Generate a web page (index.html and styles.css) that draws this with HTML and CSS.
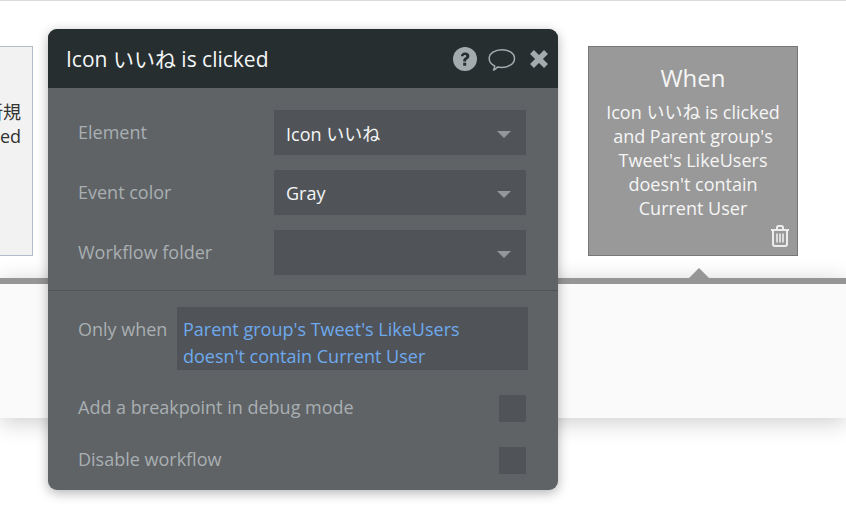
FILE: index.html
```html
<!DOCTYPE html>
<html lang="en">
<head>
<meta charset="utf-8">
<title>Icon いいね is clicked</title>
<link rel="stylesheet" href="styles.css">
</head>
<body>
<main class="canvas">
  <div class="topline"></div>
  <div class="left-card"><p>新規<br>ed</p></div>
  <div class="track"></div>
  <div class="when-card">
    <h2>When</h2>
    <p>Icon いいね is clicked and Parent group's Tweet's LikeUsers doesn't contain Current User</p>
    <svg class="trash" viewBox="0 0 20 22" width="20" height="22" aria-hidden="true">
      <path d="M1 5h18M7 5V2.5C7 1.7 7.7 1 8.500 1h3c.8 0 1.500.7 1.500 1.500V5M3 5v14c0 1.100.9 2 2 2h10c1.100 0 2-.9 2-2V5" fill="none" stroke="#ececec" stroke-width="2"/>
      <path d="M7 8.500v9M10 8.500v9M13 8.500v9" fill="none" stroke="#ececec" stroke-width="1.600"/>
    </svg>
  </div>
  <div class="notch"></div>
  <section class="popup">
    <header class="popup-head">
      <h1>Icon いいね is clicked</h1>
      <div class="head-icons">
        <svg viewBox="0 0 24 24" width="24" height="24" aria-hidden="true">
          <circle cx="12" cy="12" r="12" fill="#a3abaf"/>
          <path d="M7.800 9.300C8 6.800 9.800 5.500 12.200 5.500c2.500 0 4.200 1.400 4.200 3.500 0 1.700-1 2.500-2.100 3.200-.9.600-1.200 1-1.200 1.900v.4h-2.900v-.7c0-1.500.6-2.300 1.700-3 .9-.6 1.400-1 1.400-1.700s-.5-1.200-1.300-1.200c-.9 0-1.400.5-1.500 1.400z" fill="#272e30"/>
          <rect x="10.200" y="15.700" width="3" height="3" fill="#272e30"/>
        </svg>
        <svg viewBox="0 0 28 24" width="28" height="24" aria-hidden="true">
          <path d="M5.500 23c1.500-.4 3-1.700 4-3 1.200.3 2.700.4 4 .4 7 0 13-3.600 13-9 0-5-5.500-8.700-12.500-8.700S1.200 6.400 1.200 11.500c0 3.300 2.200 5.900 5.500 7.500-.1 1.500-.6 3-1.200 4z" fill="none" stroke="#a3abaf" stroke-width="1.500" stroke-linejoin="round"/>
        </svg>
        <svg viewBox="0 0 20 20" width="20" height="20" aria-hidden="true">
          <path d="M3 3l14 14M17 3L3 17" fill="none" stroke="#a3abaf" stroke-width="5.500"/>
        </svg>
      </div>
    </header>
    <div class="popup-fields">
      <div class="field">
        <span class="label">Element</span>
        <div class="select"><span>Icon いいね</span><i class="caret"></i></div>
      </div>
      <div class="field">
        <span class="label">Event color</span>
        <div class="select"><span>Gray</span><i class="caret"></i></div>
      </div>
      <div class="field">
        <span class="label">Workflow folder</span>
        <div class="select"><span></span><i class="caret"></i></div>
      </div>
    </div>
    <div class="popup-lower">
      <div class="condition">
        <span class="label">Only when</span>
        <div class="expr">Parent group's Tweet's LikeUsers doesn't contain Current User</div>
      </div>
      <div class="check-row">
        <span class="label">Add a breakpoint in debug mode</span>
        <i class="check"></i>
      </div>
      <div class="check-row">
        <span class="label">Disable workflow</span>
        <i class="check"></i>
      </div>
    </div>
  </section>
</main>
</body>
</html>
```
FILE: styles.css
```css
* { box-sizing: border-box; }
html, body { margin: 0; padding: 0; }
body {
  background: #fff;
  font-family: "Open Sans", "Noto Sans CJK JP", sans-serif;
  overflow: hidden;
}
h1, h2, p { margin: 0; font-weight: 400; }

.canvas {
  position: relative;
  width: 846px;
  height: 517px;
  overflow: hidden;
}
.topline {
  height: 1px;
  background: #dcdcdc;
}
.left-card {
  position: absolute;
  left: -10px;
  top: 46px;
  width: 43px;
  height: 210px;
  background: #f2f2f2;
  border: 1px solid #b4bccb;
  color: #333;
  font-size: 18px;
  line-height: 24px;
  text-align: right;
  padding: 53px 11px 0 0;
  white-space: nowrap;
  direction: rtl;
}
.track {
  position: absolute;
  left: 0;
  right: 0;
  top: 278px;
  height: 140px;
  background: #fafafa;
  border-top: 6px solid #969696;
  box-shadow: 0 4px 22px rgba(0, 0, 0, .2);
}
.when-card {
  position: absolute;
  left: 588px;
  top: 46px;
  width: 210px;
  height: 210px;
  background: #999;
  border: 1px solid #777;
  color: #f5f5f5;
  text-align: center;
  padding: 15px 12px 0;
}
.when-card h2 {
  font-size: 24px;
  line-height: 32px;
}
.when-card p {
  font-size: 18px;
  line-height: 24px;
  margin-top: 6px;
}
.trash {
  position: absolute;
  right: 7px;
  bottom: 8px;
}
.notch {
  position: absolute;
  left: 689px;
  top: 268px;
  width: 0;
  height: 0;
  border-left: 10px solid transparent;
  border-right: 10px solid transparent;
  border-bottom: 10px solid #969696;
}
.popup {
  position: absolute;
  left: 48px;
  top: 29px;
  width: 510px;
  height: 461px;
  background: #5f6366;
  border-radius: 9px;
  box-shadow: 0 3px 12px rgba(0, 0, 0, .3);
  overflow: hidden;
}
.popup-head {
  height: 59px;
  background: #272e30;
  display: flex;
  align-items: center;
  justify-content: space-between;
  padding: 0 9px 2px 18px;
}
.popup-head h1 {
  font-size: 21px;
  color: #f4f6f6;
}
.head-icons {
  display: flex;
  align-items: center;
  gap: 12px;
  margin-top: 2px;
}
.head-icons svg:nth-child(2) { margin-left: -1px; margin-right: 1px; }
.head-icons svg:first-child { margin-left: -1px; }
.popup-fields {
  display: flex;
  flex-direction: column;
  gap: 15px;
  padding: 22px 32px 15px 30px;
  border-bottom: 1px solid #505457;
}
.field {
  display: flex;
  align-items: center;
  justify-content: space-between;
  height: 45px;
}
.label {
  font-size: 18px;
  color: #a9afb2;
  white-space: nowrap;
}
.field .label { position: relative; top: -1px; }
.select {
  width: 252px;
  height: 45px;
  background: #505458;
  color: #f4f6f6;
  font-size: 18px;
  display: flex;
  align-items: center;
  justify-content: space-between;
  padding: 1px 15px 0 12px;
}
.caret {
  width: 0;
  height: 0;
  margin-top: 2px;
  border-left: 7px solid transparent;
  border-right: 7px solid transparent;
  border-top: 7px solid #94989b;
}
.popup-lower {
  padding: 16px 32px 0 30px;
}
.condition {
  display: flex;
  align-items: flex-start;
  justify-content: space-between;
  margin-right: -2px;
}
.condition .label { line-height: 45px; }
.expr {
  width: 351px;
  height: 63px;
  background: #505458;
  color: #6ea9ee;
  font-size: 18px;
  line-height: 27px;
  padding: 9px 6px 0;
}
.check-row {
  display: flex;
  align-items: center;
  justify-content: space-between;
  height: 27px;
  margin-top: 25px;
}
.check-row .label { position: relative; top: -2px; }
.check {
  display: block;
  width: 27px;
  height: 27px;
  background: #505458;
}
```
